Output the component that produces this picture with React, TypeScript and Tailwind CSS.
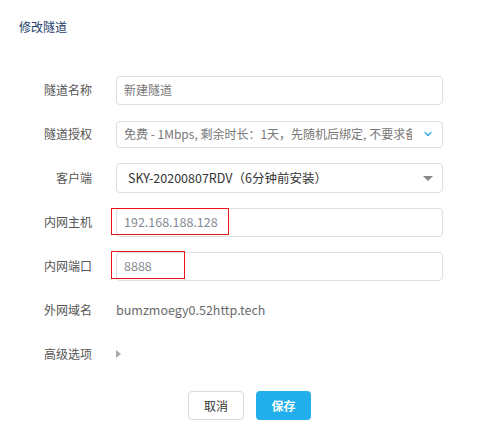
import { ChevronDown } from 'lucide-react';

const font = { fontFamily: '"Noto Sans CJK SC", "Microsoft YaHei", sans-serif' };

function Row({ label, children }: { label: string; children: React.ReactNode }) {
  return (
    <div className="flex h-[44px] items-center">
      <div className="w-[92px] shrink-0 text-right text-[12px] text-[#555]">{label}</div>
      <div className="ml-[24px] w-[327px]">{children}</div>
    </div>
  );
}

export default function App() {
  return (
    <div className="h-[435px] w-[499px] bg-white" style={font}>
      <div className="px-[19px] pt-[18px] text-[12px] leading-[18px] text-[#1c3d6b]">修改隧道</div>

      <div className="mt-[32px]">
        <Row label="隧道名称">
          <div className="flex h-[29px] items-center rounded-[4px] border border-[#d6e1e6] px-[7px] text-[12px] text-[#777]">
            新建隧道
          </div>
        </Row>

        <Row label="隧道授权">
          <div className="flex h-[27px] items-center rounded-[4px] border border-[#d6e1e6] pl-[7px] pr-[8px] text-[12px] text-[#777]">
            <span className="flex-1 overflow-hidden whitespace-nowrap">
              免费 - 1Mbps, 剩余时长：1天，先随机后绑定, 不要求备案
            </span>
            <ChevronDown className="ml-[10px] h-[12px] w-[12px] text-[#2aa7e3]" strokeWidth={2.5} />
          </div>
        </Row>

        <Row label="客户端">
          <div className="flex h-[30px] items-center rounded-[4px] border border-[#d6e1e6] pl-[11px] pr-[9px] text-[12.5px] text-[#333]">
            <span className="flex-1">SKY-20200807RDV（6分钟前安装）</span>
            <span className="h-0 w-0 border-x-[5px] border-t-[5px] border-x-transparent border-t-[#888]" />
          </div>
        </Row>

        <Row label="内网主机">
          <div className="relative">
            <div className="flex h-[29px] items-center rounded-[4px] border border-[#d6e1e6] px-[7px] text-[12.5px] text-[#858b94]">
              192.168.188.128
            </div>
            <div className="absolute left-[-5px] top-0 h-[27px] w-[118px] border border-[#e8141b]" />
          </div>
        </Row>

        <Row label="内网端口">
          <div className="relative">
            <div className="flex h-[29px] items-center rounded-[4px] border border-[#d6e1e6] px-[7px] text-[12.5px] text-[#858b94]">
              8888
            </div>
            <div className="absolute left-[-5px] top-[-1px] h-[28px] w-[74px] border border-[#e8141b]" />
          </div>
        </Row>

        <Row label="外网域名">
          <div className="text-[12.5px] text-[#6b6b6b]">bumzmoegy0.52http.tech</div>
        </Row>

        <Row label="高级选项">
          <span className="block h-0 w-0 border-y-[4px] border-l-[5px] border-y-transparent border-l-[#aaa]" />
        </Row>
      </div>

      <div className="mt-[15px] flex justify-center gap-[12px]">
        <button className="h-[29px] w-[56px] rounded-[4px] border border-[#dcdcdc] bg-white text-[12px] text-[#333]">
          取消
        </button>
        <button className="h-[29px] w-[55px] rounded-[4px] bg-[#22aeea] text-[12px] font-bold text-white">
          保存
        </button>
      </div>
    </div>
  );
}
